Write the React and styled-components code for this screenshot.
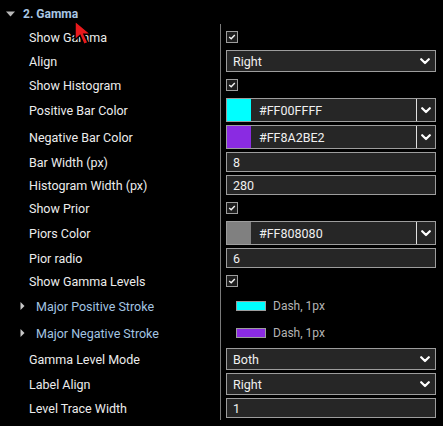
import React from "react";
import styled, { createGlobalStyle } from "styled-components";

const Global = createGlobalStyle`
  html, body { margin: 0; padding: 0; background: #000; }
  body { font-family: Roboto, "Liberation Sans", Arial, sans-serif; }
`;

const Panel = styled.div`
  position: relative;
  width: 443px;
  height: 426px;
  background: #000;
  color: #ededed;
  overflow: hidden;
`;

const Header = styled.div`
  display: flex;
  align-items: center;
  height: 24px;
  padding-top: 4px;
  box-sizing: border-box;
  padding-left: 6px;
  gap: 8px;
`;

const Title = styled.span`
  font-size: 12px;
  font-weight: 700;
  color: #a9c6e3;
  line-height: 14px;
`;

const List = styled.div`
  display: flex;
  flex-direction: column;
`;

const Row = styled.div`
  display: grid;
  grid-template-columns: 220px 223px;
  height: ${(p) => p.$h + 3}px;
`;

const LabelCell = styled.div`
  display: flex;
  align-items: center;
  padding-top: 3px;
  padding-left: ${(p) => (p.$sub ? 20 : 29)}px;
  gap: 11px;
  font-size: 12.5px;
  color: ${(p) => (p.$sub ? "#a3c4e2" : "#ececec")};
  white-space: nowrap;
`;

const ControlCell = styled.div`
  display: flex;
  align-items: center;
  border-left: 1px solid #7a7a7a;
  padding: 3px 7px 0 5px;
  box-sizing: border-box;
  min-width: 0;
`;

const Spacer = styled.div`
  height: 2px;
  margin-left: 220px;
  border-left: 1px solid #7a7a7a;
`;

const Box = styled.div`
  display: flex;
  align-items: center;
  width: 100%;
  height: ${(p) => p.$h}px;
  box-sizing: border-box;
  border: 1px solid #9d9d9d;
  background: #262626;
  color: #f0f0f0;
  font-size: 12.5px;
`;

const BoxText = styled.span`
  flex: 1;
  padding-left: ${(p) => p.$pad || 6}px;
`;

const Swatch = styled.div`
  width: 24px;
  align-self: stretch;
  background: ${(p) => p.$c};
`;

const ChevBox = styled.div`
  display: flex;
  align-items: center;
  justify-content: center;
  width: ${(p) => p.$w}px;
  align-self: stretch;
  border-left: ${(p) => (p.$div ? "1px solid #e0e0e0" : "none")};
`;

const Check = styled.div`
  width: 12px;
  height: 12px;
  box-sizing: border-box;
  border: 1px solid #9d9d9d;
  background: #1e1e1e;
  display: flex;
  align-items: center;
  justify-content: center;
`;

const StrokeSample = styled.div`
  display: flex;
  align-items: center;
  gap: 7px;
  padding-left: 10px;
  font-size: 12px;
  color: #b4b4b4;
`;

const StrokeSwatch = styled.div`
  width: 30px;
  height: 10px;
  box-sizing: border-box;
  border: 1px solid #9d9d9d;
  background: ${(p) => p.$c};
`;

const CursorWrap = styled.div`
  position: absolute;
  left: 72px;
  top: 19px;
  width: 24px;
  height: 28px;
`;

const Chevron = () => (
  <svg width="10" height="7" viewBox="0 0 10 7">
    <polyline points="1.2,1.2 5,5 8.8,1.2" fill="none" stroke="#fff" strokeWidth="2.2" strokeLinecap="round" strokeLinejoin="round" />
  </svg>
);

const DownTri = () => (
  <svg width="9" height="6" viewBox="0 0 9 6">
    <polygon points="0,0.5 9,0.5 4.5,5.5" fill="#b8b8b8" />
  </svg>
);

const RightTri = () => (
  <svg width="5" height="8" viewBox="0 0 5 8">
    <polygon points="0.5,0 4.5,4 0.5,8" fill="#c8c8c8" />
  </svg>
);

const CheckBox = () => (
  <Check>
    <svg width="8" height="8" viewBox="0 0 8 8">
      <polyline points="1.2,4 3.2,5.8 6.8,2" fill="none" stroke="#f4f4f4" strokeWidth="1.4" />
    </svg>
  </Check>
);

const Select = ({ value }) => (
  <Box $h={22}>
    <BoxText>{value}</BoxText>
    <ChevBox $w={20}>
      <Chevron />
    </ChevBox>
  </Box>
);

const TextInput = ({ value }) => (
  <Box $h={20}>
    <BoxText>{value}</BoxText>
  </Box>
);

const ColorPicker = ({ color, value }) => (
  <Box $h={24}>
    <Swatch $c={color} />
    <BoxText $pad={8}>{value}</BoxText>
    <ChevBox $w={18} $div>
      <Chevron />
    </ChevBox>
  </Box>
);

const Stroke = ({ color }) => (
  <StrokeSample>
    <StrokeSwatch $c={color} />
    <span>Dash, 1px</span>
  </StrokeSample>
);

const rows = [
  { label: "Show Gamma", h: 20, c: <CheckBox /> },
  { label: "Align", h: 22, c: <Select value="Right" /> },
  { label: "Show Histogram", h: 20, c: <CheckBox /> },
  { label: "Positive Bar Color", h: 24, c: <ColorPicker color="#00ffff" value="#FF00FFFF" /> },
  { label: "Negative Bar Color", h: 24, c: <ColorPicker color="#8a2be2" value="#FF8A2BE2" /> },
  { label: "Bar Width (px)", h: 20, c: <TextInput value="8" /> },
  { label: "Histogram Width (px)", h: 20, c: <TextInput value="280" /> },
  { label: "Show Prior", h: 20, c: <CheckBox /> },
  { label: "Piors Color", h: 24, c: <ColorPicker color="#808080" value="#FF808080" /> },
  { label: "Pior radio", h: 20, c: <TextInput value="6" /> },
  { label: "Show Gamma Levels", h: 20, c: <CheckBox /> },
  { label: "Major Positive Stroke", h: 24, sub: true, c: <Stroke color="#00ffff" /> },
  { label: "Major Negative Stroke", h: 24, sub: true, c: <Stroke color="#8a2be2" /> },
  { label: "Gamma Level Mode", h: 22, c: <Select value="Both" /> },
  { label: "Label Align", h: 22, c: <Select value="Right" /> },
  { label: "Level Trace Width", h: 20, c: <TextInput value="1" /> },
];

export default function App() {
  return (
    <>
      <Global />
      <Panel>
        <Header>
          <DownTri />
          <Title>2. Gamma</Title>
        </Header>
        <List>
          {rows.map((r) => (
            <Row key={r.label} $h={r.h}>
              <LabelCell $sub={r.sub}>
                {r.sub && <RightTri />}
                <span>{r.label}</span>
              </LabelCell>
              <ControlCell>{r.c}</ControlCell>
            </Row>
          ))}
          <Spacer />
        </List>
        <CursorWrap>
          <svg width="24" height="28" viewBox="0 0 24 28">
            <path
              d="M3 2 L3 21 L8 16.5 L12 25.5 L16 23.8 L12 15.2 L18.5 15 Z"
              fill="#e8191c"
              stroke="#000"
              strokeWidth="1.5"
              strokeLinejoin="miter"
            />
          </svg>
        </CursorWrap>
      </Panel>
    </>
  );
}
